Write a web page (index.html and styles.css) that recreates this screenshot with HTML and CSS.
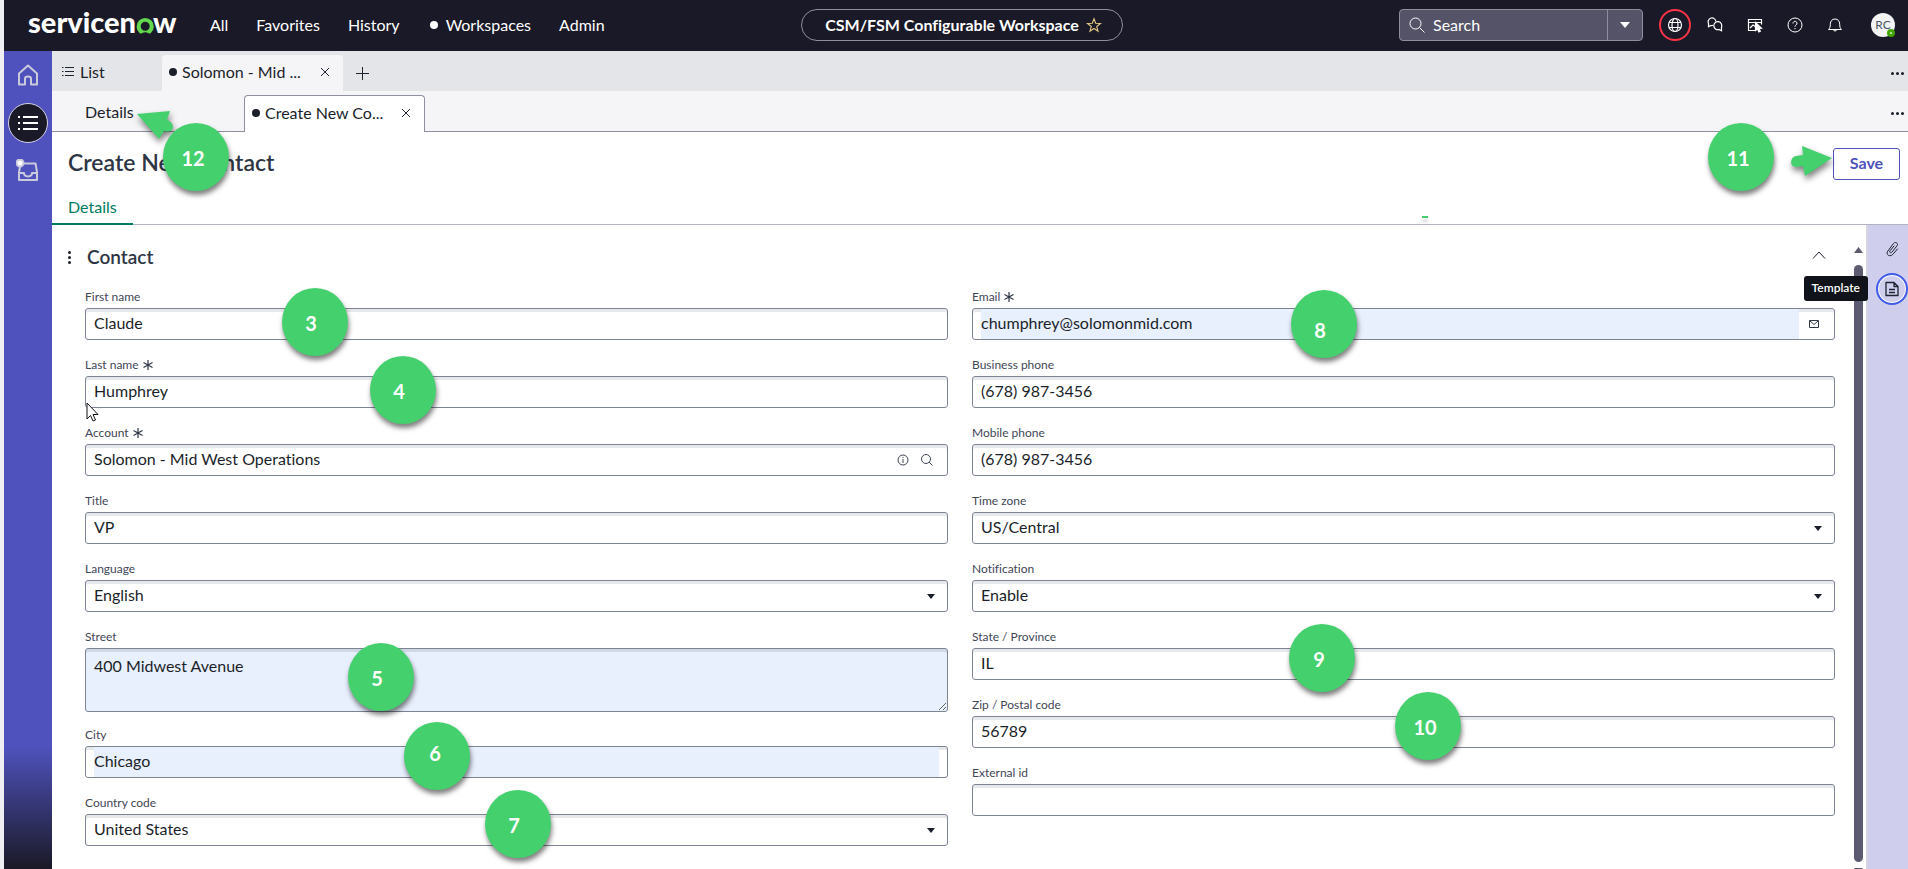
FILE: index.html
```html
<!DOCTYPE html>
<html lang="en">
<head>
<meta charset="utf-8">
<title>Create New Contact</title>
<link rel="stylesheet" href="styles.css">
</head>
<body>
<div class="app">
  <header class="topbar">
    <svg class="logo" width="150" height="30" viewBox="0 0 150 30" role="img" aria-label="servicenow">
      <text class="logo-text" x="0" y="23">servicen</text>
      <path d="M111.500 23a8.600 8.600 0 1 1 11.400 0q-1.600 1-2.800 0-2.800-1.700-5.800 0-1.400 1-2.800 0z M117.200 11.800a4.500 4.500 0 1 0 0 9 4.500 4.500 0 0 0 0-9z" fill="#62d84e" fill-rule="evenodd"/>
      <text class="logo-text" x="125" y="23">w</text>
    </svg>
    <nav class="topnav">
      <a href="#">All</a><a href="#">Favorites</a><a href="#">History</a><a href="#" class="with-dot"><i class="dot"></i>Workspaces</a><a href="#">Admin</a>
    </nav>
    <button class="context" type="button">CSM/FSM Configurable Workspace
      <svg width="16" height="16" viewBox="0 0 16 16" fill="none" stroke="#e8c987" stroke-width="1.100"><path d="M8 1.800l1.700 4.500 4.800.200-3.800 3 1.300 4.700L8 11.500l-4 2.700 1.300-4.700-3.800-3 4.800-.200z"/></svg>
    </button>
    <div class="tools">
      <div class="search">
        <svg width="16" height="16" viewBox="0 0 16 16" fill="none" stroke="#fff"><circle cx="6.500" cy="6.500" r="5.500"/><path d="M10.500 10.500l5 5"/></svg>
        <input type="text" placeholder="Search" aria-label="Search">
        <button type="button" aria-label="Search scope"><svg width="10" height="6" viewBox="0 0 10 6"><path d="M0 0h10L5 6z" fill="#fff"/></svg></button>
      </div>
      <button class="tool ringed" type="button" aria-label="Scope"><svg width="16" height="16" viewBox="0 0 16 16" fill="none" stroke="#fff" stroke-width="1.200"><circle cx="8" cy="8" r="6.500"/><ellipse cx="8" cy="8" rx="3" ry="6.500"/><path d="M2.200 5.500h11.600M2.200 10.500h11.600"/></svg></button>
      <button class="tool" type="button" aria-label="Conversations"><svg width="16" height="16" viewBox="0 0 16 16" fill="none" stroke="#fff" stroke-width="1.200"><path d="M6.200 8.300q-1.200.500-2.400.200L1.500 9.800V6.500A3.900 3.900 0 1 1 8.900 4.500"/><path d="M14.500 13.800v-3.600a4 4 0 1 0-2.600 2.300z"/></svg></button>
      <button class="tool" type="button" aria-label="Guided tour"><svg width="16" height="16" viewBox="0 0 16 16" fill="none" stroke="#fff" stroke-width="1.200"><path d="M9 13.500H1.500v-11h13v5M1.500 5.500h13M3 11l3-3 3 2"/><path d="M8.500 5.500v8l2-1.500 1.300 3 1.500-.700L12 11.500l2.500-.300z" fill="#fff"/></svg></button>
      <button class="tool" type="button" aria-label="Help"><svg width="16" height="16" viewBox="0 0 16 16" fill="none" stroke="#fff"><circle cx="8" cy="8" r="7"/><path d="M6 6.500a2 2 0 1 1 3.200 1.400C8.300 8.500 8 8.800 8 9.800"/><path d="M8 11v1.200"/></svg></button>
      <button class="tool" type="button" aria-label="Notifications"><svg width="16" height="16" viewBox="0 0 16 16" fill="none" stroke="#fff"><path d="M1.500 12.500h13c-1.500-1.500-1.800-2.500-1.800-5.300C12.700 4 10.800 2 8 2S3.300 4 3.300 7.200c0 2.800-.300 3.800-1.800 5.300zM6.500 12.500a1.500 1.500 0 0 0 3 0"/></svg></button>
      <button class="avatar" type="button" aria-label="Profile">RC<i class="presence"></i></button>
    </div>
  </header>

  <nav class="rail" aria-label="Workspace">
    <a href="#" aria-label="Home"><svg width="22" height="22" viewBox="0 0 22 22" fill="none" stroke="#c9cadb" stroke-width="2" stroke-linejoin="round"><path d="M2 9.500L11 1.500l9 8V20.500h-6v-6q0-2-3-2t-3 2v6H2z"/></svg></a>
    <a href="#" class="current" aria-label="Lists"><svg width="20" height="16" viewBox="0 0 20 16" stroke="#fff" stroke-width="2"><path d="M5 2h15M5 8h15M5 14h15M0 2h2M0 8h2M0 14h2"/></svg></a>
    <a href="#" aria-label="Inbox"><svg width="24" height="24" viewBox="0 0 24 24" fill="none" stroke="#c9cadb" stroke-width="2" stroke-linejoin="round"><path d="M8 4.500h11.500L21 13v8H3v-8l1-5M3 14h5c0 4.500 8 4.500 8 0h5"/><circle cx="4" cy="4" r="3.500" fill="#fff"/></svg></a>
  </nav>

  <main class="work">
    <div class="tabs primary">
      <a href="#" class="tab list"><svg width="12" height="12" viewBox="0 0 12 12" stroke="#1e2430"><path d="M3 1.500h9M3 5.500h9M3 9.500h9M0 1.500h1.500M0 5.500h1.500M0 9.500h1.500"/></svg>List</a>
      <div class="tab open"><a href="#"><i class="dot"></i>Solomon - Mid ...</a><button type="button" aria-label="Close tab"><svg width="8" height="8" viewBox="0 0 8 8" stroke="#1e2430"><path d="M0 0l8 8M8 0L0 8"/></svg></button></div>
      <button class="add" type="button" aria-label="New tab"><svg width="13" height="13" viewBox="0 0 13 13" stroke="#1e2430"><path d="M6.500 0v13M0 6.500h13"/></svg></button>
      <button class="more" type="button" aria-label="More"><i></i><i></i><i></i></button>
    </div>
    <div class="tabs secondary">
      <a href="#" class="tab plain">Details</a>
      <div class="tab open"><a href="#"><i class="dot"></i>Create New Co...</a><button type="button" aria-label="Close tab"><svg width="8" height="8" viewBox="0 0 8 8" stroke="#1e2430"><path d="M0 0l8 8M8 0L0 8"/></svg></button></div>
      <button class="more" type="button" aria-label="More"><i></i><i></i><i></i></button>
    </div>
    <div class="record-head">
      <h1>Create New Contact</h1>
      <button class="save" type="button">Save</button>
    </div>
    <div class="subtabs"><a href="#">Details</a></div>

    <div class="body">
      <form class="form">
        <div class="section-head">
          <button class="kebab" type="button" aria-label="Section menu"><i></i><i></i><i></i></button>
          <h2>Contact</h2>
          <button class="collapse" type="button" aria-label="Collapse"><svg width="14" height="8" viewBox="0 0 14 8" fill="none" stroke="#1e2430"><path d="M1 7.500l6-6.500 6 6.500"/></svg></button>
        </div>
        <div class="columns">
          <div class="column">
            <div class="field"><label for="first">First name</label><div class="box"><input id="first" type="text" value="Claude"></div></div>
            <div class="field"><label for="last">Last name <svg class="req" viewBox="0 0 10 10"><path d="M5 0v10M.500 2.500l9 5M9.500 2.500l-9 5"/></svg></label><div class="box"><input id="last" type="text" value="Humphrey"></div></div>
            <div class="field"><label for="account">Account <svg class="req" viewBox="0 0 10 10"><path d="M5 0v10M.500 2.500l9 5M9.500 2.500l-9 5"/></svg></label><div class="box"><input id="account" type="text" value="Solomon - Mid West Operations">
              <button type="button" aria-label="Preview"><svg width="12" height="12" viewBox="0 0 12 12" fill="none" stroke="#3f4656"><circle cx="6" cy="6" r="5"/><path d="M6 5v4M6 3v1"/></svg></button>
              <button type="button" aria-label="Look up"><svg width="12" height="12" viewBox="0 0 12 12" fill="none" stroke="#3f4656"><circle cx="5" cy="5" r="4.500"/><path d="M8 8l3.500 3.500"/></svg></button></div></div>
            <div class="field"><label for="title">Title</label><div class="box"><input id="title" type="text" value="VP"></div></div>
            <div class="field"><label for="lang">Language</label><div class="box"><select id="lang"><option>English</option></select><svg class="caret" viewBox="0 0 8 5"><path d="M0 0h8L4 5z"/></svg></div></div>
            <div class="field tall"><label for="street">Street</label><textarea id="street">400 Midwest Avenue</textarea></div>
            <div class="field"><label for="city">City</label><div class="box"><input id="city" class="filled" type="text" value="Chicago"></div></div>
            <div class="field"><label for="country">Country code</label><div class="box"><select id="country"><option>United States</option></select><svg class="caret" viewBox="0 0 8 5"><path d="M0 0h8L4 5z"/></svg></div></div>
          </div>
          <div class="column">
            <div class="field"><label for="email">Email <svg class="req" viewBox="0 0 10 10"><path d="M5 0v10M.500 2.500l9 5M9.500 2.500l-9 5"/></svg></label><div class="box mail"><input id="email" class="filled" type="text" value="chumphrey@solomonmid.com">
              <button type="button" aria-label="Send email"><svg width="10" height="8" viewBox="0 0 10 8" fill="none" stroke="#2e3544"><path d="M.500.500h9v7h-9zM1 1l4 3.500L9 1"/></svg></button></div></div>
            <div class="field"><label for="bphone">Business phone</label><div class="box"><input id="bphone" type="text" value="(678) 987-3456"></div></div>
            <div class="field"><label for="mphone">Mobile phone</label><div class="box"><input id="mphone" type="text" value="(678) 987-3456"></div></div>
            <div class="field"><label for="tz">Time zone</label><div class="box"><select id="tz"><option>US/Central</option></select><svg class="caret" viewBox="0 0 8 5"><path d="M0 0h8L4 5z"/></svg></div></div>
            <div class="field"><label for="notif">Notification</label><div class="box"><select id="notif"><option>Enable</option></select><svg class="caret" viewBox="0 0 8 5"><path d="M0 0h8L4 5z"/></svg></div></div>
            <div class="field"><label for="state">State / Province</label><div class="box"><input id="state" type="text" value="IL"></div></div>
            <div class="field"><label for="zip">Zip / Postal code</label><div class="box"><input id="zip" type="text" value="56789"></div></div>
            <div class="field"><label for="ext">External id</label><div class="box"><input id="ext" type="text"></div></div>
          </div>
        </div>
      </form>
      <div class="scroll"><svg width="9" height="6" viewBox="0 0 9 6"><path d="M4.500 0L9 6H0z" fill="#5d5b6f"/></svg><i class="thumb"></i><svg width="9" height="6" viewBox="0 0 9 6"><path d="M4.500 6L9 0H0z" fill="#5d5b6f"/></svg></div>
      <aside class="side">
        <button type="button" aria-label="Attachments"><svg width="14" height="16" viewBox="0 0 14 16" fill="none" stroke="#1e2430" stroke-linecap="round"><path d="M12.500 8l-4.800 5.500c-2.800 3-7.400 0-4.900-3.400L8.500 2.500c2-2.300 5.200-.100 3.500 2.300l-5 6.300c-1.200 1.400-3 .100-2-1.300L9 5"/></svg></button>
        <button class="current" type="button" aria-label="Template"><svg width="14" height="16" viewBox="0 0 14 16" fill="none" stroke="#1e2430" stroke-width="1.300" stroke-linejoin="round"><path d="M1 1.500h8l4 4v9H1zM9 1.500v4h4M4 8.500h6M4 11.500h6"/></svg></button>
        <span class="tip" role="tooltip">Template</span>
      </aside>
    </div>
  </main>

  <div class="callouts">
    <span class="callout c3">3</span><span class="callout c4">4</span><span class="callout c5">5</span><span class="callout c6">6</span><span class="callout c7">7</span>
    <span class="callout c8">8</span><span class="callout c9">9</span><span class="callout c10">10</span>
    <svg class="arrow a12" width="38" height="36" viewBox="0 0 38 36"><path d="M4 3l33-3-3 9q6 2 6 7-1 6-9 4l-5 8z" fill="#45d06e"/></svg>
    <span class="callout c12">12</span>
    <span class="callout c11">11</span>
    <svg class="arrow a11" width="42" height="32" viewBox="0 0 42 32"><path d="M11 0l30 12-27 18-2-10-6 1q-5 0-6-4 0-6 5-7l7-1z" fill="#45d06e"/></svg>
    <i class="speck"></i>
    <svg class="pointer" width="13" height="21" viewBox="0 0 13 21"><path d="M1 1v16l3.500-3.500L7 19l2.500-1-2.500-5.500h5z" fill="#fff" stroke="#111"/></svg>
  </div>
</div>
</body>
</html>
```
FILE: styles.css
```css
* { box-sizing: border-box; }
body { margin: 0; font: 16px/20px Lato, "Liberation Sans", sans-serif; font-variant-ligatures: none; color: #1b1f2a; background: #fff; }
button, input, select, textarea { font: inherit; font-variant-ligatures: none; color: inherit; margin: 0; padding: 0; border: 0; background: none; }
button { display: flex; align-items: center; justify-content: center; cursor: pointer; }
a { color: inherit; text-decoration: none; }
h1, h2 { margin: 0; color: #2e3544; }
svg { flex: none; }

.app {
  position: relative;
  display: grid;
  grid-template: 51px 1fr / 48px 1fr;
  height: 100vh;
  overflow: hidden;
  border-left: 4px solid #eeeef3;
}

.topbar {
  grid-column: 1 / -1;
  display: grid;
  grid-template-columns: 1fr auto 1fr;
  grid-template-areas: "left mid right";
  align-items: center;
  background: #1a1927;
  color: #fff;
  padding: 0 13px 2px 24px;
}
.logo { grid-area: left; overflow: visible; }
.logo-text { font: 900 29px Lato, sans-serif; fill: #fff; }
.topnav { grid-area: left; display: flex; gap: 28px; margin-left: 182px; line-height: 20px; }
.with-dot { display: flex; align-items: center; gap: 8px; padding-left: 2px; }
.dot { width: 8px; height: 8px; border-radius: 50%; background: currentColor; flex: none; }
.context { grid-area: mid; gap: 7px; height: 32px; width: 322px; padding-left: 4px; border: 1px solid #8f8e9d; border-radius: 16px; font-weight: 700; }
.tools { grid-area: right; display: flex; align-items: center; justify-content: flex-end; gap: 8px; }
.search { display: flex; align-items: center; width: 244px; height: 32px; margin-right: 8px; padding-left: 9px; border: 1px solid #8f8e9d; border-radius: 4px; background: #555368; }
.search input { flex: 1; min-width: 0; padding-left: 8px; outline: 0; }
.search input::placeholder { color: #fff; opacity: 1; }
.search button { width: 35px; height: 100%; border-left: 1px solid #8f8e9d; }
.tool { width: 32px; height: 32px; }
.ringed { border: 2px solid #fb3448; border-radius: 50%; }
.avatar { position: relative; width: 24px; height: 24px; margin-left: 12px; border-radius: 50%; background: #f4f4f7; color: #4b5563; font-size: 12px; line-height: 24px; }
.presence { position: absolute; right: 0; bottom: 0; width: 8px; height: 8px; border: 3px solid #42a800; border-radius: 50%; background: #d9f2c9; }

.rail { display: flex; flex-direction: column; align-items: center; gap: 8px; padding-top: 4px; background: linear-gradient(#4f52bd 85%, #1a1927); }
.rail a { display: flex; align-items: center; justify-content: center; width: 40px; height: 40px; border-radius: 50%; }
.rail .current { background: #1a1927; border: 1px solid #d5d5e8; }

.work { display: flex; flex-direction: column; min-width: 0; min-height: 0; }
.tabs { display: flex; height: 40px; flex: none; }
.primary { background: #e4e5e9; padding-top: 4px; }
.secondary { height: 41px; background: #f5f5f8; border-bottom: 1px solid #8f909f; padding-top: 4px; }
.tab { display: flex; align-items: center; padding-bottom: 2px; }
.list { width: 110px; padding-left: 10px; gap: 6px; }
.plain { width: 192px; padding-left: 33px; }
.open { width: 181px; padding: 0 10px 2px 7px; justify-content: space-between; border-radius: 4px 4px 0 0; }
.open a { display: flex; align-items: center; gap: 5px; }
.open button { width: 16px; height: 16px; }
.primary .open { background: #f5f5f8; }
.secondary .open { height: 37px; background: #fff; border: 1px solid #8f909f; border-bottom: 0; }
.add { margin-left: 13px; }
.more { margin-left: auto; margin-right: 4px; gap: 2px; }
.more i, .kebab i { width: 3px; height: 3px; border-radius: 50%; background: #1b1f2a; }

.record-head { display: flex; justify-content: space-between; align-items: center; padding: 16px 8px 8px 16px; }
h1 { padding-bottom: 4px; font-size: 23px; line-height: 28px; font-weight: 600; }
.save { width: 67px; height: 32px; padding-bottom: 2px; border: 1px solid #4f52bd; border-radius: 3px; color: #4f52bd; font-weight: 700; }
.subtabs { display: flex; height: 37px; border-bottom: 1px solid #b3b4c3; flex: none; }
.subtabs a { width: 81px; height: 37px; padding: 9px 0 0 16px; border-bottom: 2px solid #007a5e; color: #007a5e; }

.body { flex: 1; display: flex; min-height: 0; }
.form { flex: 1; min-width: 0; padding: 16px 17px 0 12px; }
.section-head { display: flex; align-items: center; height: 32px; }
.kebab { flex-direction: column; gap: 2px; width: 10px; }
h2 { margin-left: 13px; font-size: 19px; font-weight: 600; }
.collapse { margin-left: auto; padding: 0 9px 5px; }
.columns { display: grid; grid-template-columns: 1fr 1fr; gap: 24px; padding: 16px 0 0 21px; }
.column { display: flex; flex-direction: column; gap: 17px; }
.field { display: flex; flex-direction: column; gap: 3px; }
.tall { margin-bottom: -2px; }
label { display: flex; align-items: center; gap: 4px; font-size: 12px; line-height: 16px; color: #3f4656; }
.req { width: 10px; height: 10px; fill: none; stroke: #2e3544; stroke-width: 1.200; }
.box, textarea { border: 1px solid #7d8494; border-radius: 3px; box-shadow: inset 0 3px 0 #e6e8e9; background: #fff; }
.box { display: flex; align-items: center; height: 32px; padding: 0 8px; }
.box input, .box select { flex: 1; min-width: 0; height: 100%; padding-bottom: 2px; outline: 0; appearance: none; }
.box input { padding-bottom: 3px; }
.box .filled { background: #e8effd; }
.box button { width: 24px; height: 24px; }
.mail button { margin-left: 3px; }
.caret { width: 10px; height: 5px; fill: #1b1f2a; margin-right: 3px; }
textarea { height: 64px; padding: 7px 8px; background: #e8effd; box-shadow: inset 0 3px 0 #d0d8e6; resize: vertical; display: block; }

.scroll { display: flex; flex-direction: column; align-items: center; gap: 12px; width: 14px; padding: 22px 1px 0 0; }
.thumb { flex: 1; width: 9px; border-radius: 5px; background: #5d5b6f; }
.scroll svg:last-child { margin: -6px 0 -5px; }
.side { position: relative; display: flex; flex-direction: column; gap: 8px; align-items: center; width: 42px; padding: 8px 0 0 8px; background: #cfcfed; border-left: 2px solid #d5d5dd; }
.side button { width: 32px; height: 32px; }
.side .current { border: 2px solid #3f5be8; border-radius: 50%; box-shadow: inset 0 0 0 1px #fff; }
.tip { position: absolute; right: 40px; top: 51px; padding: 1px 8px 3px; border-radius: 3px; background: #10131a; color: #fff; font-size: 12px; font-weight: 600; line-height: 21px; }

/* Step markers float over the screen */
.callouts { position: absolute; inset: 0; pointer-events: none; }
.callout { position: absolute; width: 66px; height: 68px; padding-right: 8px; border-radius: 50%; background: #45d06e; color: #fff; font-size: 20px; font-weight: 700; line-height: 70px; text-align: center; box-shadow: 1px 4px 5px rgba(0, 0, 0, .5); }
.c3 { left: 278px; top: 288px; }
.c4 { left: 366px; top: 356px; }
.c5 { left: 344px; top: 643px; }
.c6 { left: 400px; top: 722px; padding-right: 4px; line-height: 62px; }
.c7 { left: 481px; top: 790px; }
.c8 { left: 1287px; top: 290px; line-height: 80px; }
.c9 { left: 1285px; top: 624px; padding-right: 6px; }
.c10 { left: 1391px; top: 692px; padding-right: 6px; }
.c12 { left: 159px; top: 123px; padding-right: 6px; }
.c11 { right: 134px; top: 123px; padding-right: 6px; }
.arrow { position: absolute; overflow: visible; filter: drop-shadow(1px 4px 3px rgba(0, 0, 0, .5)); }
.a12 { left: 129px; top: 111px; }
.a11 { right: 75px; top: 146px; }
.speck { position: absolute; left: 1418px; top: 216px; width: 6px; height: 2px; background: #45d06e; box-shadow: 0 4px 3px rgba(0, 0, 0, .2); }
.pointer { position: absolute; left: 82px; top: 402px; }
```
